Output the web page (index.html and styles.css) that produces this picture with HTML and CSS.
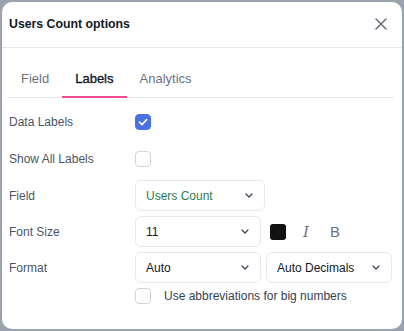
FILE: index.html
```html
<!DOCTYPE html>
<html lang="en">
<head>
    <meta charset="UTF-8">
    <meta name="viewport" content="width=device-width, initial-scale=1.0">
    <title>Users Count options</title>
    <link rel="stylesheet" href="styles.css">
</head>
<body>
    <div class="dialog">
        <div class="dialog-header">
            <h2>Users Count options</h2>
            <button class="close-btn" aria-label="Close">
                <svg width="14" height="14" viewBox="0 0 14 14"><path d="M2 2L12 12M12 2L2 12" stroke="#6b7280" stroke-width="1.6" stroke-linecap="round"/></svg>
            </button>
        </div>

        <div class="dialog-body">
            <div class="tabs">
                <div class="tab">Field</div>
                <div class="tab active">Labels</div>
                <div class="tab">Analytics</div>
            </div>

            <div class="form">
                <div class="row check-row">
                    <div class="label">Data Labels</div>
                    <span class="checkbox checked">
                        <svg width="16" height="16" viewBox="0 0 16 16"><path d="M4.5 8.2L7 10.6L11.6 5.6" fill="none" stroke="#fff" stroke-width="1.6" stroke-linecap="round" stroke-linejoin="round"/></svg>
                    </span>
                </div>
                <div class="row check-row">
                    <div class="label">Show All Labels</div>
                    <span class="checkbox"></span>
                </div>
                <div class="row">
                    <div class="label">Field</div>
                    <div class="select wide green">
                        <span>Users Count</span>
                        <svg class="chevron" width="8" height="5" viewBox="0 0 8 5"><path d="M1 1L4 4L7 1" fill="none" stroke="#374151" stroke-width="1.2" stroke-linecap="round" stroke-linejoin="round"/></svg>
                    </div>
                </div>
                <div class="row">
                    <div class="label">Font Size</div>
                    <div class="select">
                        <span>11</span>
                        <svg class="chevron" width="8" height="5" viewBox="0 0 8 5"><path d="M1 1L4 4L7 1" fill="none" stroke="#374151" stroke-width="1.2" stroke-linecap="round" stroke-linejoin="round"/></svg>
                    </div>
                    <span class="swatch"></span>
                    <span class="style-btn italic">I</span>
                    <span class="style-btn bold">B</span>
                </div>
                <div class="row">
                    <div class="label">Format</div>
                    <div class="select">
                        <span>Auto</span>
                        <svg class="chevron" width="8" height="5" viewBox="0 0 8 5"><path d="M1 1L4 4L7 1" fill="none" stroke="#374151" stroke-width="1.2" stroke-linecap="round" stroke-linejoin="round"/></svg>
                    </div>
                    <div class="select second">
                        <span>Auto Decimals</span>
                        <svg class="chevron" width="8" height="5" viewBox="0 0 8 5"><path d="M1 1L4 4L7 1" fill="none" stroke="#374151" stroke-width="1.2" stroke-linecap="round" stroke-linejoin="round"/></svg>
                    </div>
                </div>
                <div class="row abbr-row">
                    <div class="label"></div>
                    <span class="checkbox"></span>
                    <span class="abbr-text">Use abbreviations for big numbers</span>
                </div>
            </div>
        </div>
    </div>
</body>
</html>
```

FILE: styles.css
```css
* {
    box-sizing: border-box;
}
body {
    margin: 0;
    background: #9ca3af;
    font-family: "Liberation Sans", Arial, sans-serif;
    font-size: 12px;
    color: #111827;
}
.dialog {
    margin: 2px;
    width: 400px;
    height: 327px;
    background: white;
    border-radius: 10px;
    overflow: hidden;
}
.dialog-header {
    display: flex;
    align-items: center;
    justify-content: space-between;
    height: 46px;
    padding: 0 14px 2px 7px;
    border-bottom: 1px solid #e5e7eb;
}
.dialog-header h2 {
    margin: 0;
    font-size: 12.3px;
    font-weight: bold;
}
.close-btn {
    border: none;
    background: none;
    padding: 0;
    display: flex;
}
.dialog-body {
    padding: 13px 8px 0 6px;
}
.tabs {
    display: flex;
    border-bottom: 1px solid #e5e7eb;
}
.tab {
    padding: 9px 13px;
    line-height: 17px;
    font-size: 13px;
    color: #6b7280;
    border-bottom: 2px solid transparent;
    margin-bottom: -1px;
}
.tab.active {
    color: #111827;
    -webkit-text-stroke: 0.35px #111827;
    border-bottom-color: #ec4d8f;
}
.form {
    display: flex;
    flex-direction: column;
    gap: 5px;
    padding: 8px 0 0 1px;
}
.row {
    display: flex;
    align-items: center;
}
.check-row {
    height: 32px;
}
.label {
    width: 126px;
    flex-shrink: 0;
    color: #4b5563;
}
.checkbox {
    width: 16px;
    height: 16px;
    border: 1px solid #d1d5db;
    border-radius: 4px;
    display: flex;
    flex-shrink: 0;
}
.checkbox.checked {
    background: #4b70e2;
    border-color: #4b70e2;
}
.checkbox.checked svg {
    margin: -1px;
}
.select {
    width: 126px;
    height: 31px;
    border: 1px solid #e5e7eb;
    border-radius: 6px;
    display: flex;
    align-items: center;
    justify-content: space-between;
    padding: 0 11px 0 10px;
    color: #111827;
}
.select.wide {
    width: 130px;
}
.select.green {
    color: #2f7d4e;
}
.select.second {
    margin-left: 5px;
}
.swatch {
    width: 16px;
    height: 16px;
    background: #111;
    border-radius: 3px;
    margin-left: 9px;
}
.style-btn {
    font-size: 15px;
    color: #6b7280;
    width: 10px;
    text-align: center;
}
.style-btn.italic {
    font-family: "DejaVu Serif", serif;
    font-style: italic;
    margin-left: 15px;
}
.style-btn.bold {
    margin-left: 19px;
}
.abbr-text {
    margin-left: 13px;
    color: #374151;
}
```
